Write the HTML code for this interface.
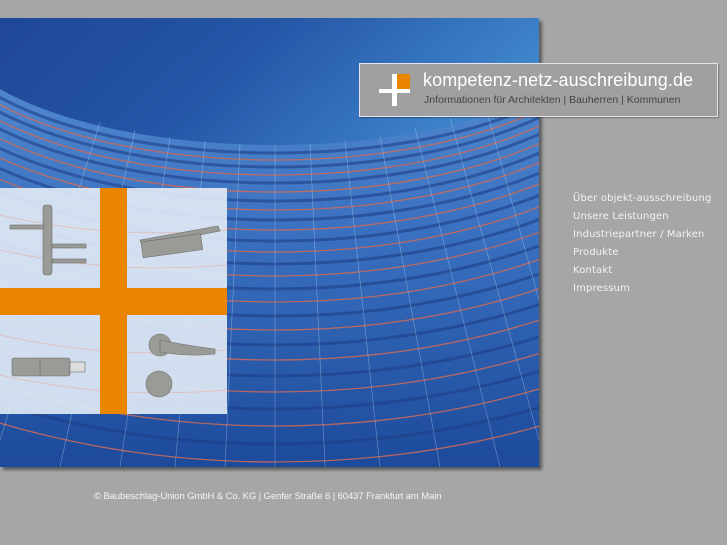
<!DOCTYPE html>
<html><head><meta charset="utf-8"><style>
html,body{margin:0;padding:0;background:#a6a6a6;width:727px;height:545px;overflow:hidden;font-family:"DejaVu Sans","Liberation Sans",sans-serif}
.img{position:absolute;left:0;top:18px;width:539px;height:449px;box-shadow:3px 3px 3px rgba(0,0,0,.45);overflow:hidden}
.logo{position:absolute;left:359px;top:63px;width:357px;height:52px;background:#a0a0a0;border:1px solid #e6e6e6;box-shadow:1px 1px 1px rgba(0,0,0,.3)}
.logo .t1{position:absolute;left:63px;top:6px;font-family:"Liberation Sans",sans-serif;font-size:18px;color:#fff;letter-spacing:.1px}
.logo .t2{position:absolute;left:64px;top:30px;font-family:"Liberation Sans",sans-serif;font-size:10.5px;color:#444}
.menu{position:absolute;left:573px;top:190px;font-size:10px;color:#f2f2f2;line-height:18px;letter-spacing:.15px}
.foot{position:absolute;left:94px;top:491px;font-family:"Liberation Sans",sans-serif;font-size:9.5px;color:#f4f4f4;letter-spacing:-.1px}
</style></head><body>
<div class="img">
<svg width="539" height="449" viewBox="0 18 539 449">
<defs>
<linearGradient id="sky" x1="0" y1="0" x2="1" y2="0.4"><stop offset="0" stop-color="#1b3f8c"/><stop offset=".6" stop-color="#2455a6"/><stop offset="1" stop-color="#3f85cc"/></linearGradient>
<linearGradient id="bld" x1="0" y1="0" x2="0" y2="1"><stop offset="0" stop-color="#5c94d6"/><stop offset=".5" stop-color="#3a70c0"/><stop offset="1" stop-color="#1d4a9a"/></linearGradient>
</defs>
<path d="M0 0 H539 V467 H0Z" fill="url(#bld)"/>
<g fill="none" stroke="#1e3f86" stroke-width="3" opacity=".6">
<ellipse cx="275" cy="20" rx="338" ry="133"/><ellipse cx="275" cy="20" rx="353" ry="147"/>
<ellipse cx="275" cy="20" rx="370" ry="163"/><ellipse cx="275" cy="20" rx="390" ry="181"/>
<ellipse cx="275" cy="20" rx="411" ry="200"/><ellipse cx="275" cy="20" rx="434" ry="221"/>
<ellipse cx="275" cy="20" rx="459" ry="244"/><ellipse cx="275" cy="20" rx="486" ry="269"/>
<ellipse cx="275" cy="20" rx="515" ry="296"/><ellipse cx="275" cy="20" rx="546" ry="325"/>
<ellipse cx="275" cy="20" rx="579" ry="356"/><ellipse cx="275" cy="20" rx="614" ry="389"/>
<ellipse cx="275" cy="20" rx="651" ry="424"/>
</g>
<ellipse cx="275" cy="20" rx="330" ry="125" fill="url(#sky)"/>
<g fill="none" stroke="#c86a5a" stroke-width="1.3" opacity=".9">
<ellipse cx="275" cy="20" rx="345" ry="140"/><ellipse cx="275" cy="20" rx="362" ry="155"/>
<ellipse cx="275" cy="20" rx="380" ry="172"/><ellipse cx="275" cy="20" rx="400" ry="190"/>
<ellipse cx="275" cy="20" rx="422" ry="210"/><ellipse cx="275" cy="20" rx="446" ry="232"/>
<ellipse cx="275" cy="20" rx="472" ry="256"/><ellipse cx="275" cy="20" rx="500" ry="282"/>
<ellipse cx="275" cy="20" rx="530" ry="310"/><ellipse cx="275" cy="20" rx="562" ry="340"/>
<ellipse cx="275" cy="20" rx="596" ry="372"/><ellipse cx="275" cy="20" rx="632" ry="406"/>
<ellipse cx="275" cy="20" rx="670" ry="442"/>
</g>
<g stroke="#bcd4ee" stroke-width=".6" opacity=".5">
<path d="M275 145 L275 467 M240 144 L225 467 M205 141 L175 467 M170 137 L120 467 M135 130 L60 467 M100 122 L0 440 M310 144 L325 467 M345 141 L380 467 M380 136 L440 467 M415 128 L500 467 M450 118 L539 440 M485 105 L539 300"/>
</g>
<rect x="0" y="188" width="227" height="226" fill="#dfe9f5" opacity=".92"/>
<g stroke="#e8b0a0" stroke-width=".8" fill="none" opacity=".8">
<path d="M0 215 Q110 240 227 230 M0 250 Q110 275 227 265 M0 335 Q110 360 227 350 M0 375 Q110 400 227 390"/>
</g>
<rect x="100" y="188" width="27" height="226" fill="#ea8500"/>
<rect x="0" y="288" width="227" height="27" fill="#ea8500"/>
<g fill="#9a9a96" stroke="#6d6d6a" stroke-width=".6">
<rect x="43" y="205" width="9" height="70" rx="3"/>
<rect x="10" y="225" width="34" height="4"/><rect x="52" y="244" width="34" height="4"/><rect x="52" y="259" width="34" height="4"/>
<path d="M140 240 L218 226 L220 231 L142 246Z"/><rect x="141" y="242" width="60" height="16" transform="rotate(-8 141 242)"/>
<rect x="12" y="358" width="30" height="18" rx="2"/><rect x="40" y="358" width="30" height="18" rx="2"/><rect x="70" y="362" width="15" height="10" fill="#ddd"/>
<circle cx="160" cy="345" r="11"/><path d="M160 340 Q190 346 215 349 L215 354 Q188 357 160 352Z"/>
<circle cx="159" cy="384" r="13"/>
</g>
</svg>
</div>
<div class="logo">
<svg width="40" height="40" style="position:absolute;left:16px;top:8px">
<rect x="20" y="2" width="14" height="15" fill="#ea8500"/>
<rect x="16" y="2" width="5" height="32" fill="#fff"/>
<rect x="3" y="17" width="31" height="4" fill="#fff"/>
</svg>
<div class="t1">kompetenz-netz-auschreibung.de</div>
<div class="t2">Jnformationen für Architekten | Bauherren | Kommunen</div>
</div>
<div class="menu">Über objekt-ausschreibung<br>Unsere Leistungen<br>Industriepartner / Marken<br>Produkte<br>Kontakt<br>Impressum</div>
<div class="foot">© Baubeschlag-Union GmbH &amp; Co. KG | Genfer Straße 6 | 60437 Frankfurt am Main</div>
</body></html>
